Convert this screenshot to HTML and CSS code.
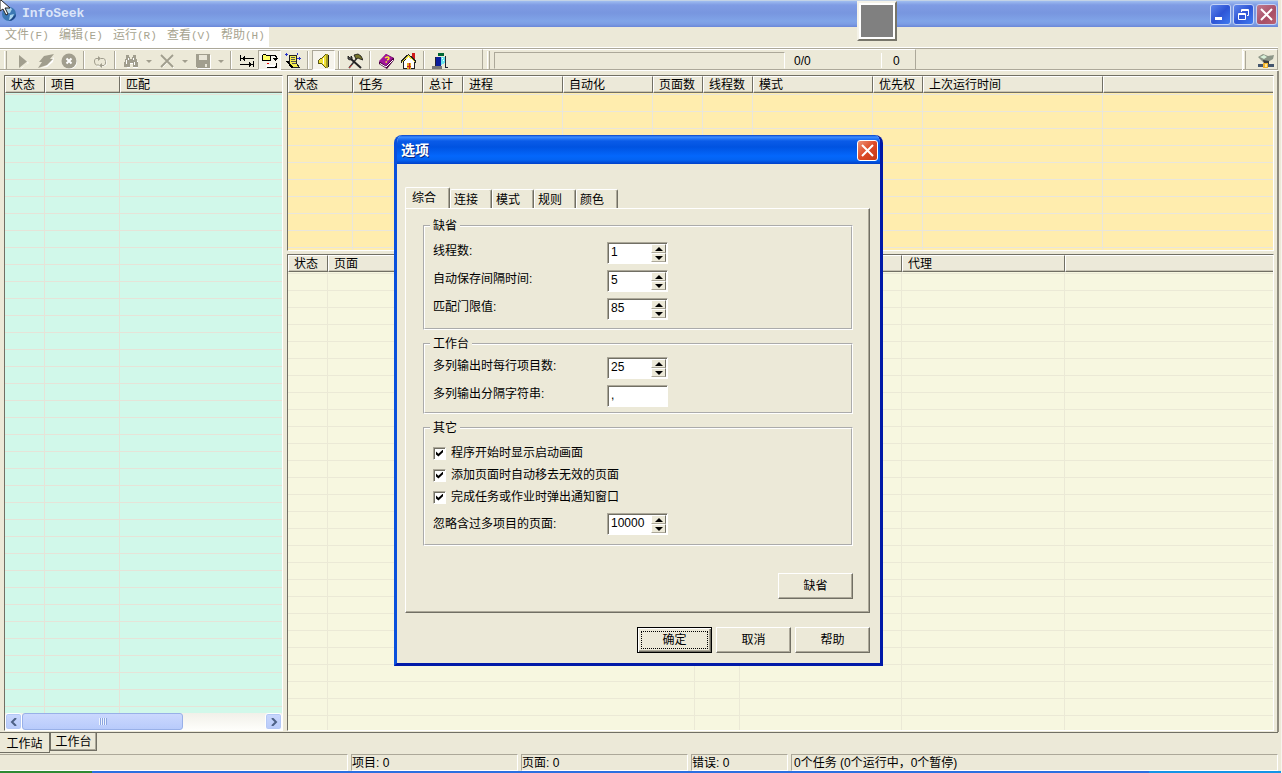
FILE: index.html
```html
<!DOCTYPE html>
<html lang="zh-CN">
<head>
<meta charset="utf-8">
<title>InfoSeek</title>
<link rel="stylesheet" href="styles.css">
</head>
<body>
<div class="app">
  <header class="titlebar">
    <svg class="globe" width="16" height="16" viewBox="0 0 16 16"><circle cx="8" cy="8" r="7" fill="#3c78b4"/><path d="M3 4q4-4 8-1l-2 4-5 1zM9 9l4-1-2 5-3 1z" fill="#a9d3ee"/><path d="M8 15a7 7 0 0 0 7-7l-3 3z" fill="#1d4586"/></svg>
    <h1 class="title">InfoSeek</h1>
    <div class="winbtns">
      <button class="winbtn" aria-label="最小化"><svg width="19" height="19" viewBox="0 0 19 19"><path d="M4 12h7v3H4z" fill="#fff"/></svg></button>
      <button class="winbtn" aria-label="还原"><svg width="19" height="19" viewBox="0 0 19 19" fill="none" stroke="#fff"><path d="M7.500 7V4.500h7v6H13M7 5.500h8M4.500 8.500h7v6h-7zM4 9.500h8"/></svg></button>
      <button class="winbtn winbtn-close" aria-label="关闭"><svg width="19" height="19" viewBox="0 0 19 19"><path d="M4 4l11 11M15 4L4 15" stroke="#fff" stroke-width="2"/></svg></button>
    </div>
  </header>

  <nav class="menubar">
    <button class="menu">文件<span class="key">(F)</span></button>
    <button class="menu">编辑<span class="key">(E)</span></button>
    <button class="menu">运行<span class="key">(R)</span></button>
    <button class="menu">查看<span class="key">(V)</span></button>
    <button class="menu">帮助<span class="key">(H)</span></button>
  </nav>

  <div class="toolbars">
    <div class="toolbar">
      <i class="grip"></i>
      <button class="tool" aria-label="开始"><svg viewBox="0 0 16 16"><path d="M5 3l8 7-7 6v-1l8-5" fill="#fff"/><path d="M4 2l8 6.500L4 15z" fill="#a19e8e"/></svg></button>
      <button class="tool" aria-label="快速运行"><svg viewBox="0 0 16 16"><path d="M2 15l6-2 8-9-1 5-6 5z" fill="#fff"/><path d="M0 15l4-6H1l5-6 10-2-4 5h3l-6 6z" fill="#a19e8e"/></svg></button>
      <button class="tool" aria-label="停止"><svg viewBox="0 0 16 16"><circle cx="9" cy="9" r="7" fill="#fff"/><circle cx="8" cy="8" r="7.500" fill="#a19e8e"/><path d="M5.500 5.500l5 5M10.500 5.500l-5 5" stroke="#fff" stroke-width="2"/></svg></button>
      <i class="sep"></i>
      <button class="tool" aria-label="循环"><svg viewBox="0 0 16 16" fill="none"><path d="M5 13h6l3-1V7" stroke="#fff"/><path d="M7 5.500H4Q2 6 2.500 9t2 3H7M9 12.500h3q2-1 1.500-4t-2-3H9" stroke="#a19e8e"/><path d="M6 3v5l3-2.500zM10 10v5l-3-2.500z" fill="#a19e8e"/></svg></button>
      <i class="sep"></i>
      <button class="tool" aria-label="查找"><svg viewBox="0 0 16 16" shape-rendering="crispEdges"><path d="M4 15h3v-4h3v4h5V9l-3-5" fill="#fff"/><path d="M3 2h3v2h1v2h2V4h1V2h3v3l2 5v4h-5v-4H7v4H1v-4l2-5z" fill="#a19e8e"/><path d="M3 7v4M5 5v2M10 5v2M11 9v3" stroke="#fff"/></svg></button>
      <button class="drop" aria-label="查找选项"></button>
      <button class="tool" aria-label="删除"><svg viewBox="0 0 16 16"><path d="M3 3l12 12M14 3L4 14" stroke="#fff"/><path d="M2 2l12 12M14 2L2 14" stroke="#a19e8e" stroke-width="1.800"/></svg></button>
      <button class="drop" aria-label="删除选项"></button>
      <button class="tool" aria-label="保存"><svg viewBox="0 0 16 16" shape-rendering="crispEdges"><path d="M2 2h14v14H3z" fill="#fff"/><path d="M1 1h14v14H2l-1-1z" fill="#a19e8e"/><path d="M4 2h8v5H4zM10 11h2v3h-2z" fill="#e9e6d8"/></svg></button>
      <button class="drop" aria-label="保存选项"></button>
      <i class="sep"></i>
      <button class="tool" aria-label="制表"><svg viewBox="0 0 16 16" shape-rendering="crispEdges"><path d="M1.500 2v6M2 5.500h13M14.500 8v6M1 11.500h13" stroke="#000" fill="none"/><path d="M3 5.500l3-3v6zM13 11.500l-3-3v6z"/></svg></button>
      <button class="tool tool-on" aria-label="文件夹跳转"><svg viewBox="0 0 16 16" shape-rendering="crispEdges"><path d="M.5 7.500v-5l1-1h2l1 1h4v5z" fill="#ff6" stroke="#000"/><path d="M9 2.500h4l1 1V7" fill="none" stroke="#000"/><path d="M11 5h5v1h-1v1h-1v1h-1V7h-1V6h-1z"/><path d="M5 10h2v1H5z" fill="#e00"/><path d="M5 15v-2h9v-3h1v5z"/><path d="M4 12h9v2H4z" fill="#fff"/></svg></button>
      <button class="tool" aria-label="新建任务"><svg viewBox="0 0 16 16" shape-rendering="crispEdges"><path d="M4 2h7l1 9 2 3H7L4 11z" fill="#f5ec4b" stroke="#222"/><path d="M6 4.500h4M6 6.500h4M6 8.500h5M7 10.500h4" stroke="#555"/><path d="M1 0v3M0 1.500h3M14 4v3M12 5.500h4M12 0v2" stroke="#2632c8"/><path d="M2 8l4 5 2 2" stroke="#000" stroke-width="2"/></svg></button>
      <i class="sep"></i>
      <button class="tool tool-on" aria-label="声音"><svg viewBox="0 0 16 16" shape-rendering="crispEdges"><path d="M2.500 7.500l2-2h1l4-4h1v13h-1l-4-4h-3z" fill="#f1e337" stroke="#5a5616"/><path d="M10 1h2v14h-2z" fill="#a49d27"/><path d="M12 2v12" stroke="#222"/><path d="M7 5v6" stroke="#fff"/></svg></button>
      <i class="sep"></i>
      <button class="tool" aria-label="工具"><svg viewBox="0 0 16 16"><path d="M2 15l8-10" stroke="#333" stroke-width="1.500"/><path d="M4 6l10 9" stroke="#222" stroke-width="2"/><path d="M5 12l-3 3" stroke="#b33" stroke-width="1"/><path d="M7 2l4-1 3 2 2 4-3-1-2-1-2 1z" fill="#77752c" stroke="#111" stroke-width=".8"/><path d="M1 3v3l2 1 2-1V4L4 3v2H3z" fill="#555" stroke="#111" stroke-width=".8"/></svg></button>
      <i class="sep"></i>
      <button class="tool" aria-label="帮助主题"><svg viewBox="0 0 16 16"><path d="M1 9L8 1l8 4v2l-7 9-8-5z" fill="#4b0040"/><path d="M1 8l7-7 7 4-7 8z" fill="#a3159b"/><path d="M2 10.500l6 3.500 7-7" stroke="#fff" fill="none"/><path d="M7 5q3-2 4 0 0 1.500-2 2M7.500 9h1.500" stroke="#f7ec2f" stroke-width="1.500" fill="none"/></svg></button>
      <button class="tool" aria-label="主页"><svg viewBox="0 0 16 16" shape-rendering="crispEdges"><path d="M11 0h3v6h-3z" fill="#d01818"/><path d="M2.500 15.500V8l5-5 6 5v7.500z" fill="#fff" stroke="#222"/><path d="M0 9l7.500-7L15 9" fill="none" stroke="#222" stroke-width="2"/><path d="M1 9l6.500-6L14 9" fill="none" stroke="#f0e442"/><path d="M6 10h4v6H6z" fill="#e9a820"/><path d="M8 10v6M6 13h4" stroke="#c22"/></svg></button>
      <i class="sep"></i>
      <button class="tool" aria-label="退出"><svg viewBox="0 0 16 16" shape-rendering="crispEdges"><path d="M6 0h6v3H6z" fill="#063"/><path d="M0 13h10v3H0z" fill="#777"/><path d="M4 4h5v9H3z" fill="#0a1c9c"/><path d="M9 4h4v6l-4 2z" fill="#6be4ee"/><path d="M13.500 3v11H16M3.500 4v9" stroke="#223" fill="none"/><path d="M10 5h1v1h-1zM11 7h1v1h-1z" fill="#fff"/></svg></button>
    </div>
    <div class="toolbar toolbar-progress">
      <i class="grip"></i>
      <div class="track" role="progressbar" aria-label="进度"></div>
      <output class="ratio">0/0</output>
      <output class="count">0</output>
    </div>
    <div class="toolbar toolbar-net">
      <i class="grip"></i>
      <button class="tool tool-net" aria-label="网络"><svg viewBox="0 0 16 16"><path d="M0 4l5-3 5 2 6-1-1 4-5 3H5z" fill="#8d9688"/><path d="M2 4l4-2 3 2-3 2z" fill="#d8f0d8"/><path d="M5 7l6 1v3H6z" fill="#3c3c3c"/><path d="M0 11h16v3H0z" fill="#45566e"/><path d="M5 10h5v5H5z" fill="#f2b32c"/><path d="M7 11h2v3H7z" fill="#ffe79a"/></svg></button>
    </div>
  </div>

  <main class="workspace">
    <section class="pane pane-projects">
      <div class="list">
        <table class="grid">
          <colgroup><col class="w40"><col class="w75"><col></colgroup>
          <thead><tr><th>状态</th><th>项目</th><th>匹配</th></tr></thead>
          <tbody><tr><td></td><td></td><td></td></tr></tbody>
        </table>
      </div>
      <div class="hscroll">
        <button class="scrollbtn" aria-label="向左"><svg width="8" height="8" viewBox="0 0 8 8"><path d="M6 0L2 4l4 4" fill="none" stroke="#4d6185" stroke-width="2"/></svg></button>
        <div class="thumb"><i class="ridges"></i></div>
        <button class="scrollbtn" aria-label="向右"><svg width="8" height="8" viewBox="0 0 8 8"><path d="M2 0l4 4-4 4" fill="none" stroke="#4d6185" stroke-width="2"/></svg></button>
      </div>
    </section>
    <div class="stack">
      <section class="pane pane-tasks">
        <div class="list">
          <table class="grid">
            <colgroup><col class="w65"><col class="w70"><col class="w40"><col class="w100"><col class="w90"><col class="w50"><col class="w50"><col class="w120"><col class="w50"><col class="w180"><col></colgroup>
            <thead><tr><th>状态</th><th>任务</th><th>总计</th><th>进程</th><th>自动化</th><th>页面数</th><th>线程数</th><th>模式</th><th>优先权</th><th>上次运行时间</th><th></th></tr></thead>
            <tbody><tr><td></td><td></td><td></td><td></td><td></td><td></td><td></td><td></td><td></td><td></td><td></td></tr></tbody>
          </table>
        </div>
      </section>
      <section class="pane pane-pages">
        <div class="list">
          <table class="grid">
            <colgroup><col class="w40"><col class="w367"><col class="w45"><col class="w162"><col class="w163"><col></colgroup>
            <thead><tr><th>状态</th><th>页面</th><th></th><th></th><th>代理</th><th></th></tr></thead>
            <tbody><tr><td></td><td></td><td></td><td></td><td></td><td></td></tr></tbody>
          </table>
        </div>
      </section>
    </div>
  </main>

  <div class="sheets" role="tablist">
    <button class="sheet sheet-on" role="tab" aria-selected="true">工作站</button>
    <button class="sheet" role="tab" aria-selected="false">工作台</button>
  </div>

  <footer class="status">
    <div class="cell cell-main"></div>
    <div class="cell cell-mid">项目: 0</div>
    <div class="cell cell-mid">页面: 0</div>
    <div class="cell cell-err">错误: 0</div>
    <div class="cell cell-rest">0个任务 (0个运行中，0个暂停)</div>
  </footer>
  <div class="taskbar"><i class="start"></i><i class="tray"></i></div>
</div>

<div class="floatbox"></div>
<svg class="cursor" width="12" height="17" viewBox="0 0 12 17"><path d="M0 0v11l3-2 3 6 2-1-3-6h5L1 0z" fill="#fff" stroke="#222"/></svg>

<div class="dialog" role="dialog" aria-labelledby="dlg-title">
  <div class="dlg-bar">
    <h2 class="dlg-title" id="dlg-title">选项</h2>
    <button class="dlg-close" aria-label="关闭"><svg width="17" height="17" viewBox="0 0 17 17"><path d="M3 3l11 11M14 3L3 14" stroke="#fff" stroke-width="2"/></svg></button>
  </div>
  <form class="dlg-body">
    <div class="tabs" role="tablist">
      <button type="button" class="tab tab-on" role="tab" aria-selected="true">综合</button>
      <button type="button" class="tab" role="tab" aria-selected="false">连接</button>
      <button type="button" class="tab" role="tab" aria-selected="false">模式</button>
      <button type="button" class="tab" role="tab" aria-selected="false">规则</button>
      <button type="button" class="tab" role="tab" aria-selected="false">颜色</button>
    </div>
    <div class="page">
      <fieldset class="group">
        <legend>缺省</legend>
        <div class="row"><label for="threads">线程数:</label><div class="spin"><input id="threads" type="text" value="1"><div class="arrows"><button type="button" class="up" aria-label="增加"></button><button type="button" class="down" aria-label="减少"></button></div></div></div>
        <div class="row"><label for="autosave">自动保存间隔时间:</label><div class="spin"><input id="autosave" type="text" value="5"><div class="arrows"><button type="button" class="up" aria-label="增加"></button><button type="button" class="down" aria-label="减少"></button></div></div></div>
        <div class="row"><label for="limit">匹配门限值:</label><div class="spin"><input id="limit" type="text" value="85"><div class="arrows"><button type="button" class="up" aria-label="增加"></button><button type="button" class="down" aria-label="减少"></button></div></div></div>
      </fieldset>
      <fieldset class="group group-desk">
        <legend>工作台</legend>
        <div class="row"><label for="percol">多列输出时每行项目数:</label><div class="spin"><input id="percol" type="text" value="25"><div class="arrows"><button type="button" class="up" aria-label="增加"></button><button type="button" class="down" aria-label="减少"></button></div></div></div>
        <div class="row"><label for="delim">多列输出分隔字符串:</label><div class="spin"><input id="delim" type="text" value=","></div></div>
      </fieldset>
      <fieldset class="group group-other">
        <legend>其它</legend>
        <div class="checks">
          <label class="check"><input type="checkbox" checked>程序开始时显示启动画面</label>
          <label class="check"><input type="checkbox" checked>添加页面时自动移去无效的页面</label>
          <label class="check"><input type="checkbox" checked>完成任务或作业时弹出通知窗口</label>
        </div>
        <div class="row"><label for="ignore">忽略含过多项目的页面:</label><div class="spin"><input id="ignore" type="text" value="10000"><div class="arrows"><button type="button" class="up" aria-label="增加"></button><button type="button" class="down" aria-label="减少"></button></div></div></div>
      </fieldset>
      <div class="actions actions-page"><button type="button" class="btn">缺省</button></div>
    </div>
    <div class="actions">
      <button type="button" class="btn btn-default">确定</button>
      <button type="button" class="btn">取消</button>
      <button type="button" class="btn">帮助</button>
    </div>
  </form>
</div>
</body>
</html>
```
FILE: styles.css
```css
* { box-sizing: border-box; }
body {
  margin: 0;
  background: #ece9d8;
  color: #000;
  font: 12px/14px "Liberation Sans", "Noto Sans CJK SC", sans-serif;
}
button, input { font: inherit; color: inherit; }
button { padding: 0; border: 0; background: none; white-space: nowrap; }

.app {
  min-height: 100vh;
  display: flex;
  flex-direction: column;
  border-right: 1px solid #f6f5ee;
}

/* Title bar */
.titlebar {
  height: 27px;
  display: flex;
  align-items: center;
  padding: 0 1px 0 1px;
  border-top: 1px solid #c3d3e6;
  margin-right: 3px;
  background: linear-gradient(#9fbdf0 0, #7f9ce4 4px, #7896df 12px, #80a4e8 20px, #7c9de4 23px, #6a87d8 26px);
}
.title {
  flex: 1;
  margin: 0 0 0 5px;
  font: bold 13px/16px "Liberation Mono", monospace;
  color: #dbe5f9;
}
.winbtns { display: flex; gap: 2px; }
.winbtn {
  width: 21px;
  height: 21px;
  border: 1px solid #c4d3f6;
  border-radius: 3px;
  background: linear-gradient(135deg, #5f86ea, #2e55d6 50%, #3f7bf0);
}
.winbtn svg { display: block; }
.winbtn-close { background: linear-gradient(135deg, #c07a90, #a84f66 60%, #bc6272); }

/* Menu */
.menubar {
  height: 20px;
  display: flex;
  align-self: flex-start;
  background: #fff;
}
.menu { width: 54px; padding: 0 0 3px 5px; text-align: left; color: #a7a490; }
.menu:last-child { width: 53px; }
.key { font: 11px/14px "Liberation Mono", monospace; }

/* Toolbars */
.toolbars {
  height: 24px;
  display: flex;
  margin-right: 3px;
  border-top: 1px solid #fff;
  border-bottom: 1px solid #fff;
  box-shadow: inset 0 1px #aca899, inset 0 -1px #aca899;
}
.toolbar {
  display: flex;
  align-items: center;
  height: 21px;
  margin-top: 1px;
  padding-left: 4px;
  border-top: 1px solid #fff;
  border-right: 1px solid #aca899;
}
.toolbar:first-child { width: 483px; }
.toolbar-progress { flex: 0 1 433px; }
.toolbar-net { margin-left: auto; width: 36px; padding-left: 0; border-left: 1px solid #fff; }
.grip { width: 3px; height: 18px; margin-right: 4px; border-left: 1px solid #fff; border-right: 1px solid #aca899; }
.sep { width: 2px; height: 18px; margin: 0 3px; border-left: 1px solid #aca899; border-right: 1px solid #fff; }
.tool { width: 23px; height: 20px; padding-top: 2px; display: flex; justify-content: center; align-items: center; }
.tool svg { width: 16px; height: 16px; }
.tool-on { background: #f6f4ec; border: 1px solid; border-color: #aca899 #fff #fff #aca899; }
.tool-net { margin-left: 4px; }
.drop { width: 13px; height: 18px; padding-top: 2px; display: flex; align-items: center; justify-content: center; }
.drop::before { content: ""; border: 3px solid transparent; border-top-color: #a19e8e; border-bottom: 0; }
.track { flex: 1; height: 17px; border: 1px solid; border-color: #aca899 #fff transparent #aca899; }
.ratio { width: 97px; padding: 1px 0 0 9px; border-right: 1px solid #fff; }
.count { width: 33px; padding: 1px 0 0 11px; }

/* Panes */
.workspace {
  flex: 1;
  display: flex;
  gap: 4px;
  margin-right: 2px;
  padding: 4px 3px 1px 4px;
  border-right: 2px solid #8f8c7f;
}
.stack { flex: 1; display: flex; flex-direction: column; gap: 3px; min-width: 0; }
.pane {
  display: flex;
  flex-direction: column;
  border: 1px solid;
  border-color: #716f64 #fff #fff #716f64;
  box-shadow: inset 1px 0 #aca899;
}
.pane-projects { width: 279px; --face: #d1f8ea; --line: #e6e3d8; }
.pane-tasks { height: 176px; --face: #ffedae; --line: #e9e6dc; }
.pane-pages { flex: 1; --face: #f7f7e0; --line: #ebe9d6; }
.list {
  flex: 1;
  display: flex;
  background: linear-gradient(transparent 1px, var(--line) 1px 2px, transparent 2px) 0 0 / 100% 17px var(--face);
}
.grid { width: 100%; table-layout: fixed; border-collapse: separate; border-spacing: 0; }
.grid thead tr { height: 17px; }
.grid th {
  height: 17px;
  padding: 1px 0 0 5px;
  overflow: hidden;
  background: #ece9d9;
  border: 1px solid;
  border-color: #fff #716f64 #716f64 #fff;
  box-shadow: inset 0 -1px #c8c4b4;
  font-weight: normal;
  line-height: 14px;
  text-align: left;
  white-space: nowrap;
}
.grid td { padding: 0; border-right: 1px solid var(--line); }
.grid th:last-child, .grid td:last-child { border-right: 0; }
.w40 { width: 40px; }
.w45 { width: 45px; }
.w50 { width: 50px; }
.w65 { width: 65px; }
.w70 { width: 70px; }
.w75 { width: 75px; }
.w90 { width: 90px; }
.w100 { width: 100px; }
.w120 { width: 120px; }
.w162 { width: 162px; }
.w163 { width: 163px; }
.w180 { width: 180px; }
.w367 { width: 367px; }

.hscroll { height: 17px; display: flex; background: linear-gradient(#f1f0e9, #fefefb); }
.scrollbtn {
  width: 17px;
  display: flex;
  align-items: center;
  justify-content: center;
  border: 1px solid #fff;
  border-radius: 3px;
  background: linear-gradient(#c9d7fd, #b9cbf9);
  box-shadow: inset 0 0 0 1px #b4c8f6;
}
.scrollbtn:last-child { margin-left: auto; }
.thumb {
  width: 161px;
  display: flex;
  align-items: center;
  justify-content: center;
  border: 1px solid #98b0e8;
  border-radius: 3px;
  background: linear-gradient(#cbd8fe, #b8cbfb);
}
.ridges { width: 8px; height: 7px; background: repeating-linear-gradient(90deg, #eef4fe 0 1px, #8ca6e0 1px 2px); }

/* Sheet tabs */
.sheets { height: 22px; display: flex; align-items: flex-start; margin-right: 3px; border-top: 1px solid #716f64; }
.sheet { width: 47px; height: 18px; border: 1px solid #716f64; border-top: 0; box-shadow: inset -1px -1px #aca899; }
.sheet-on { width: 50px; height: 20px; padding-top: 2px; border-left: 0; background: #ece9d8; box-shadow: none; }

/* Status bar */
.status { height: 17px; display: flex; gap: 3px; padding-right: 3px; }
.cell { padding: 1px 0 0; border: 1px solid; border-color: #aca899 #fff #fff #aca899; white-space: nowrap; }
.cell-main { width: 348px; border-left: 0; }
.cell-mid { width: 167px; }
.cell-err { width: 97px; }
.cell-rest { flex: 1; padding-left: 2px; }
.taskbar { height: 2px; display: flex; justify-content: space-between; background: #2a6fe0; }
.start { width: 92px; background: #2f8a34; }
.tray { width: 132px; background: #1494e6; }

/* Floating items */
.floatbox {
  position: absolute;
  left: 857px;
  top: 1px;
  width: 40px;
  height: 40px;
  border: 2px solid;
  border-color: #f4f2e8 #77756a #77756a #f4f2e8;
  box-shadow: inset 0 0 0 2px #fff;
  background: #808080;
}
.cursor { position: absolute; left: 0; top: 0; }

/* Options dialog */
.dialog {
  position: absolute;
  left: 394px;
  top: 135px;
  width: 489px;
  border: 3px solid;
  border-color: #0a50dc #0019a8 #0019a8 #0a50dc;
  border-top: 0;
  border-radius: 8px 8px 0 0;
  background: #ece9d8;
  overflow: hidden;
}
.dlg-bar {
  height: 29px;
  display: flex;
  align-items: center;
  justify-content: space-between;
  padding: 1px 2px 0 4px;
  background: linear-gradient(#0842c4 0, #3b8dff 2px, #0a5be8 6px, #0053e1 12px, #0467fc 21px, #0463f2 25px, #003fc8 29px);
}
.dlg-title { margin: 0; font-size: 14px; line-height: 16px; color: #fff; text-shadow: 1px 1px #0a2a80; }
.dlg-close {
  width: 21px;
  height: 21px;
  border: 1px solid #fff;
  border-radius: 3px;
  background: linear-gradient(135deg, #ee9478, #dc4a26 50%, #c63a14);
}
.dlg-close svg { display: block; margin: 1px; }
.dlg-body { padding: 23px 10px 10px 8px; }
.tabs { display: flex; align-items: flex-end; height: 21px; }
.tab {
  width: 42px;
  height: 19px;
  padding: 2px 10px 0 0;
  border: 1px solid;
  border-color: #fff #716f64 transparent #fff;
  border-bottom: 0;
  border-radius: 2px 2px 0 0;
  box-shadow: inset -1px 0 #aca899;
}
.tab-on { width: 45px; height: 21px; padding: 0 7px 0 0; }
.page {
  padding: 10px 16px 13px 17px;
  border: 1px solid;
  border-color: #fff #716f64 #716f64 #fff;
  box-shadow: inset -1px -1px #aca899;
}
.group { min-width: 0; margin: 0 0 7px; padding: 9px 8px 8px; border: 2px groove #fff; display: flex; flex-direction: column; gap: 6px; }
.group legend { padding: 0 3px; margin-left: -3px; }
.group-desk { padding: 6px 8px 5px; }
.group-other { padding: 7px 8px 9px; gap: 5px; }
.row { display: flex; justify-content: space-between; padding-right: 175px; }
.row label { padding-top: 2px; }
.group-other .row label { padding-top: 4px; }
.spin {
  width: 61px;
  height: 22px;
  display: flex;
  border: 1px solid;
  border-color: #aca899 #fff #fff #aca899;
  box-shadow: inset 1px 1px #716f64;
  background: #fff;
  padding: 1px;
}
.spin input { flex: 1; min-width: 0; width: 0; padding: 0 0 2px 2px; border: 0; background: none; outline: 0; }
.arrows { width: 15px; display: flex; flex-direction: column; }
.arrows button {
  flex: 1;
  display: flex;
  align-items: center;
  justify-content: center;
  background: #ece9d8;
  border: 1px solid;
  border-color: #fff #716f64 #aca899 #fff;
}
.up::before, .down::before { content: ""; border: 4px solid transparent; }
.up::before { border-bottom-color: #000; border-top: 0; }
.down::before { border-top-color: #000; border-bottom: 0; }
.check { height: 22px; display: flex; align-items: center; gap: 5px; }
.check input {
  appearance: none;
  width: 13px;
  height: 13px;
  margin: 0;
  display: grid;
  place-items: center;
  background: #fff;
  border: 1px solid;
  border-color: #aca899 #fff #fff #aca899;
  box-shadow: inset 1px 1px #716f64;
}
.check input:checked::before {
  content: "";
  width: 7px;
  height: 7px;
  background: #000;
  clip-path: polygon(0 30%, 35% 60%, 100% 0, 100% 40%, 35% 100%, 0 70%);
}
.actions { display: flex; justify-content: flex-end; gap: 4px; padding-top: 14px; }
.actions-page { padding-top: 20px; }
.btn {
  width: 75px;
  height: 26px;
  border: 1px solid;
  border-color: #fff #716f64 #716f64 #fff;
  box-shadow: inset -1px -1px #aca899;
}
.btn-default {
  border-color: #000;
  box-shadow: inset 1px 1px #fff, inset -1px -1px #716f64, inset -2px -2px #aca899;
  outline: 1px dotted #000;
  outline-offset: -5px;
}
```
